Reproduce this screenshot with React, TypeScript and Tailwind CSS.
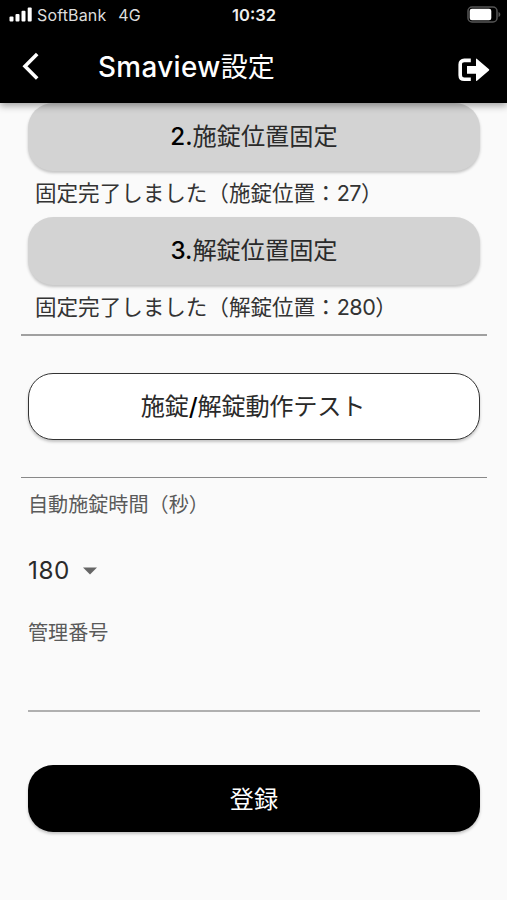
import type { ReactNode } from "react";

function Signal() {
  return (
    <svg className="mb-[2px]" width="24" height="15" viewBox="0 0 24 15" fill="#fff">
      <rect x="0.5" y="9.5" width="4" height="5" rx="1" />
      <rect x="6.5" y="7" width="4" height="7.5" rx="1" />
      <rect x="12.5" y="3.8" width="4" height="10.7" rx="1" />
      <rect x="18.7" y="0.5" width="4" height="14" rx="1" />
    </svg>
  );
}

function Battery() {
  return (
    <svg className="mb-[2px]" width="34" height="17" viewBox="0 0 34 17">
      <rect x="1" y="1" width="29" height="15" rx="4" fill="none" stroke="#555" strokeWidth="1.5" />
      <rect x="2.7" y="2.8" width="21.6" height="11.4" rx="2.2" fill="#fff" />
      <path d="M31.5 6v5c1.3-.5 1.8-1.4 1.8-2.5S32.800 6.500 31.500 6z" fill="#555" />
    </svg>
  );
}

function BackIcon() {
  return (
    <svg className="-mt-[2px]" width="18" height="28" viewBox="0 0 18 28" fill="none" stroke="#fff" strokeWidth="3.6">
      <path d="M15.200 2 3 14.200 15.200 26.400" />
    </svg>
  );
}

function LogoutIcon() {
  return (
    <svg width="32" height="24" viewBox="0 0 32 24">
      <path d="M12.800 2.400H6.300Q2.200 2.400 2.200 6.500V17.200Q2.200 21.300 6.300 21.300H12.800" fill="none" stroke="#fff" strokeWidth="3.6" />
      <path
        d="M9 7.900H18V1.300Q18 .1 19 .9L31 11.200Q31.500 11.800 31 12.400L19 22.800Q18 23.500 18 22.300V15.800H9Z"
        fill="#fff"
      />
    </svg>
  );
}

type ButtonProps = {
  children: ReactNode;
  className: string;
};

function Button({ children, className }: ButtonProps) {
  return (
    <button
      className={`flex w-full items-center justify-center rounded-[25px] text-[24.2px] leading-[24px] shadow-[0_2px_3px_rgba(0,0,0,0.22)] ${className}`}
    >
      <span>{children}</span>
    </button>
  );
}

function Status({ label, value }: { label: string; value: number }) {
  return (
    <p className="h-[46px] pl-[7px] text-[21.6px] leading-[45px] tracking-[-0.05px] text-[#333]">
      固定完了しました（{label}：<span className="tracking-[-0.5px]">{value}</span>）
    </p>
  );
}

export default function App() {
  return (
    <div className="flex h-[900px] w-[507px] flex-col overflow-hidden bg-[#fafafa] font-['Inter','Noto_Sans_CJK_JP',sans-serif] text-[#2a2a2a]">
      <header className="relative z-10 h-[103px] shrink-0 bg-black text-white shadow-[0_3px_7px_rgba(0,0,0,0.35)]">
        <div className="grid h-[30px] grid-cols-3 items-center pr-[7px] pl-[9px] text-[16px] leading-none">
          <div className="flex items-center">
            <Signal />
            <span className="ml-[4px] tracking-[0.15px] text-[#ddd]">SoftBank</span>
            <span className="ml-[12px] text-[#ddd]">4G</span>
          </div>
          <span className="pr-px text-center text-[16.5px] font-semibold text-[#eee]">10:32</span>
          <div className="-mr-px flex justify-end">
            <Battery />
          </div>
        </div>
        <div className="flex h-[73px] items-center pr-[17px] pl-[22px]">
          <BackIcon />
          <h1 className="mt-[2px] ml-[58px] text-[27.8px] leading-none font-medium">
            <span className="tracking-[0.4px]">Smaview</span>
            <span className="text-[27px] font-normal">設定</span>
          </h1>
          <div className="mt-[7px] ml-auto">
            <LogoutIcon />
          </div>
        </div>
      </header>

      <main className="flex flex-col pr-[20px] pl-[21px]">
        <section className="flex flex-col px-[7px]">
          <Button className="h-[68px] bg-[#d3d3d3]">
            <span className="font-medium text-black">2.</span>
            施錠位置固定
          </Button>
          <Status label="施錠位置" value={27} />
          <Button className="h-[68px] bg-[#d3d3d3]">
            <span className="font-medium text-black">3.</span>
            解錠位置固定
          </Button>
          <Status label="解錠位置" value={280} />
        </section>

        <div className="mt-[3px] h-[2px] bg-[#a0a0a0]" />
        <div className="px-[7px] pt-[37px] pb-[37px]">
          <Button className="h-[67px] border-[1.5px] border-[#333] bg-white pr-[2px] tracking-[-0.2px]">
            施錠
            <span className="font-medium text-black">/</span>
            解錠動作テスト
          </Button>
        </div>
        <div className="h-px bg-[#888]" />

        <section className="flex flex-col px-[7px]">
          <label className="mt-[17px] text-[20.1px] leading-[20px] text-[#5a5a5a]">自動施錠時間（秒）</label>
          <div className="mt-[42px] flex h-[26px] items-center">
            <span className="text-[24.3px] leading-none tracking-[0.5px]">180</span>
            <svg className="mt-px ml-[13px]" width="14" height="8" viewBox="0 0 14 8">
              <path d="M0 .5h14L7 7.500z" fill="#666" />
            </svg>
          </div>
          <label className="mt-[40px] text-[20.1px] leading-[20px] text-[#5a5a5a]">管理番号</label>
          <div className="mt-[67px] h-[2px] bg-[#b0b0b0]" />
          <div className="mt-[53px]">
            <Button className="h-[67px] bg-black pt-[2px] text-white">登録</Button>
          </div>
        </section>
      </main>
    </div>
  );
}
